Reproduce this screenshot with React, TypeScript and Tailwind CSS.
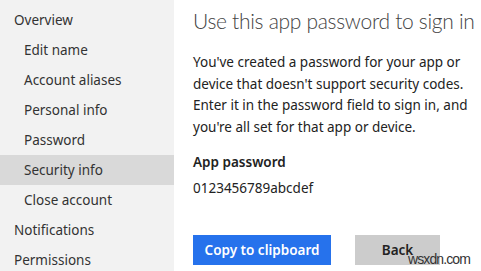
import React from "react";

const items: { label: string; sub?: boolean; active?: boolean }[] = [
  { label: "Overview" },
  { label: "Edit name", sub: true },
  { label: "Account aliases", sub: true },
  { label: "Personal info", sub: true },
  { label: "Password", sub: true },
  { label: "Security info", sub: true, active: true },
  { label: "Close account", sub: true },
  { label: "Notifications" },
  { label: "Permissions" },
];

export default function App() {
  return (
    <div
      className="relative flex w-[481px] h-[271px] overflow-hidden bg-white text-[#222]"
      style={{ fontFamily: '"Noto Sans", "Open Sans", sans-serif' }}
    >
      <nav className="w-[174px] shrink-0 bg-[#f2f2f2] pt-[5px]">
        {items.map((it) => (
          <div
            key={it.label}
            className={`h-[30px] flex items-center text-[13.5px] text-[#333] ${
              it.sub ? "pl-[24px]" : "pl-[14px]"
            } ${it.active ? "bg-[#d9d9d9]" : ""}`}
          >
            {it.label}
          </div>
        ))}
      </nav>
      <main className="flex-1 pl-[19px] pt-[6px]">
        <h1
          className="text-[21px] font-light text-[#444] leading-[30px] whitespace-nowrap tracking-[-0.3px]"
          style={{ fontFamily: 'Lato, "Noto Sans", sans-serif' }}
        >
          Use this app password to sign in
        </h1>
        <p className="mt-[16px] text-[13.5px] leading-[21.5px] text-[#222] w-[280px]">
          You've created a password for your app or device that doesn't support security codes.
          Enter it in the password field to sign in, and you're all set for that app or device.
        </p>
        <div className="mt-[12px] text-[13.5px] font-semibold leading-[24px] text-[#222]">
          App password
        </div>
        <div className="mt-[2px] text-[13.5px] leading-[24px] text-[#222]">0123456789abcdef</div>
        <div className="mt-[35px] flex gap-[24px]">
          <button className="h-[30px] w-[138px] bg-[#2672ec] text-white text-[13.5px] font-semibold">
            Copy to clipboard
          </button>
          <button className="h-[30px] w-[85px] bg-[#cccccc] text-[#222] text-[13.5px] font-semibold">
            Back
          </button>
        </div>
      </main>
      <div
        className="absolute left-[408px] top-[251px] text-[14px] leading-[16px] tracking-[-0.9px] text-[#333]"
        style={{ fontFamily: '"Liberation Sans", Arial, sans-serif' }}
      >
        wsxdn.com
      </div>
    </div>
  );
}
